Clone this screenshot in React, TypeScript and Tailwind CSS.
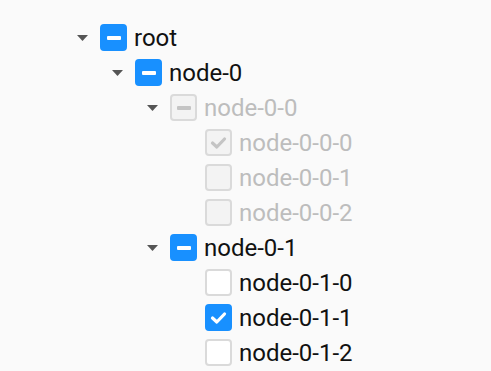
import React from 'react'

type Check = 'checked' | 'half' | 'none'

type Row = {
  label: string
  level: number
  expandable?: boolean
  state: Check
  disabled?: boolean
}

const rows: Row[] = [
  { label: 'root', level: 0, expandable: true, state: 'half' },
  { label: 'node-0', level: 1, expandable: true, state: 'half' },
  { label: 'node-0-0', level: 2, expandable: true, state: 'half', disabled: true },
  { label: 'node-0-0-0', level: 3, state: 'checked', disabled: true },
  { label: 'node-0-0-1', level: 3, state: 'none', disabled: true },
  { label: 'node-0-0-2', level: 3, state: 'none', disabled: true },
  { label: 'node-0-1', level: 2, expandable: true, state: 'half' },
  { label: 'node-0-1-0', level: 3, state: 'none' },
  { label: 'node-0-1-1', level: 3, state: 'checked' },
  { label: 'node-0-1-2', level: 3, state: 'none' },
]

const indent = ['pl-[70px]', 'pl-[105px]', 'pl-[140px]', 'pl-[175px]']

function Caret() {
  return (
    <svg width="11" height="6" viewBox="0 0 11 6">
      <path d="M0 0 L11 0 L5.5 6 Z" fill="#555" />
    </svg>
  )
}

function Checkbox({ state, disabled }: { state: Check; disabled?: boolean }) {
  const on = state !== 'none'
  const box = disabled
    ? 'bg-[#f3f3f3] border-[#dadada]'
    : on
      ? 'bg-[#1890ff] border-[#1890ff]'
      : 'bg-white border-[#dadada]'
  const mark = disabled ? '#c4c4c4' : '#ffffff'
  return (
    <span className={`flex h-[27px] w-[27px] flex-shrink-0 items-center justify-center rounded-[4px] border-2 ${box}`}>
      {state === 'half' && <span className="h-[4px] w-[14px] rounded-[1px]" style={{ background: mark }} />}
      {state === 'checked' && (
        <svg width="17" height="14" viewBox="0 0 17 14">
          <path d="M2.5 7 L6.8 11 L14.5 3" fill="none" stroke={mark} strokeWidth="3.2" strokeLinecap="round" strokeLinejoin="round" />
        </svg>
      )}
    </span>
  )
}

export default function App() {
  return (
    <div className="h-[371px] w-[491px] bg-[#fafafa] pt-[20px] font-['Roboto',sans-serif]">
      {rows.map((r) => (
        <div key={r.label} className={`flex h-[35px] items-center ${indent[r.level]}`}>
          <span className="flex w-6 justify-center">{r.expandable && <Caret />}</span>
          <span className="ml-1.5">
            <Checkbox state={r.state} disabled={r.disabled} />
          </span>
          <span className={`ml-[7px] text-[24px] leading-none ${r.disabled ? 'text-[#bdbdbd]' : 'text-[#111]'}`}>
            {r.label}
          </span>
        </div>
      ))}
    </div>
  )
}
